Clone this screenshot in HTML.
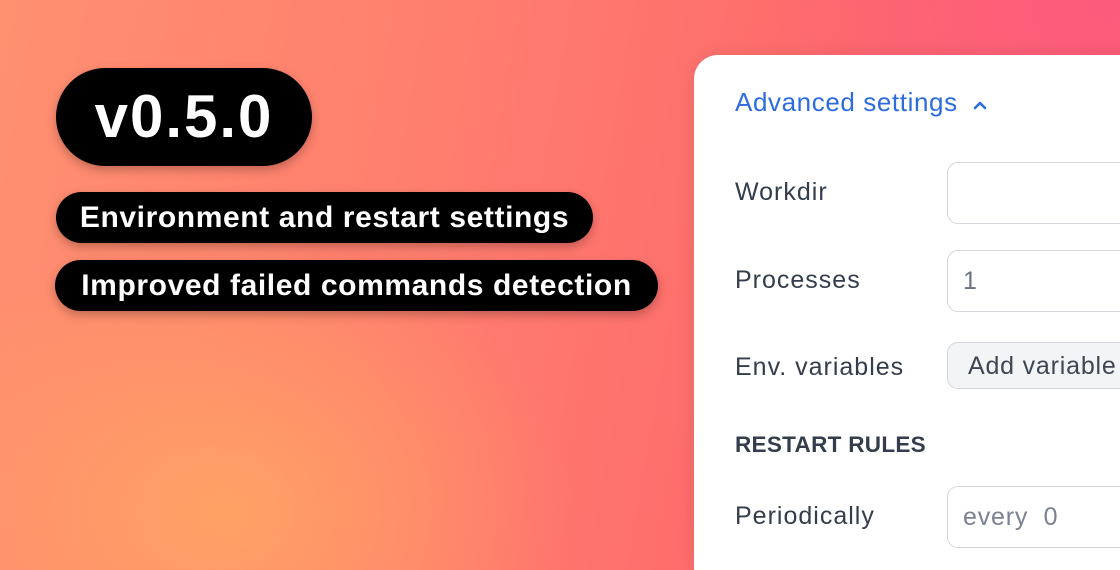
<!DOCTYPE html>
<html style="overflow:hidden;width:1120px;height:570px"><head><style>
body{margin:0;width:1120px;height:570px;overflow:hidden;position:relative;font-family:"Liberation Sans",sans-serif;
background:
radial-gradient(ellipse 500px 400px at 20% 90%, rgba(255,165,100,.9), rgba(255,165,100,0) 70%),
radial-gradient(ellipse 500px 350px at 100% 0%, rgba(252,90,125,.9), rgba(252,90,125,0) 70%),
linear-gradient(100deg,#ff9070 0%,#ff7d6e 40%,#fe6a6c 70%,#fd6476 100%);}
.pill{position:absolute;background:#000;color:#fff;font-weight:bold;border-radius:40px;box-shadow:0 4px 10px rgba(0,0,0,.25);white-space:nowrap}
.card{position:absolute;left:694px;top:55px;width:460px;height:515px;background:#fff;border-radius:24px 24px 0 0;box-shadow:0 0 20px rgba(0,0,0,.08)}
.lbl{position:absolute;left:41px;font-size:25px;letter-spacing:1px;color:#333d4b;white-space:nowrap}
.inp{position:absolute;left:253px;width:300px;height:62px;border:1.5px solid #d3d6dc;border-radius:11px;box-sizing:border-box;font-size:25px;letter-spacing:.8px;color:#6b7280}
</style></head><body>
<div class="pill" style="left:56px;top:68px;width:256px;height:98px;font-size:60px;letter-spacing:2px;line-height:98px;text-align:center;border-radius:50px">v0.5.0</div>
<div class="pill" style="left:56px;top:192px;width:537px;height:51px;font-size:30px;letter-spacing:.6px;line-height:51px;text-align:center;border-radius:26px">Environment and restart settings</div>
<div class="pill" style="left:55px;top:260px;width:603px;height:51px;font-size:30px;letter-spacing:.6px;line-height:51px;text-align:center;border-radius:26px">Improved failed commands detection</div>
<div class="card">
<div style="position:absolute;left:41px;top:32px;font-size:26px;letter-spacing:.6px;color:#2d6cdf;white-space:nowrap">Advanced settings <svg width="16" height="12" viewBox="0 0 16 12" style="margin-left:6px"><path d="M3 9 L8 4 L13 9" stroke="#2d6cdf" stroke-width="2.6" fill="none" stroke-linecap="round" stroke-linejoin="round"/></svg></div>
<div class="lbl" style="top:123px">Workdir</div>
<div class="inp" style="top:107px"></div>
<div class="lbl" style="top:211px">Processes</div>
<div class="inp" style="top:195px;padding:16px 0 0 15px">1</div>
<div class="lbl" style="top:298px">Env. variables</div>
<div class="inp" style="top:287px;height:47px;background:#f3f4f6;padding:9px 0 0 20px;color:#3f4654">Add variable</div>
<div class="lbl" style="top:377px;font-weight:bold;font-size:22.5px;letter-spacing:.3px">RESTART RULES</div>
<div class="lbl" style="top:447px">Periodically</div>
<div class="inp" style="top:431px;padding:16px 0 0 15px;color:#7b8190">every &nbsp;0</div>
</div>
</body></html>
